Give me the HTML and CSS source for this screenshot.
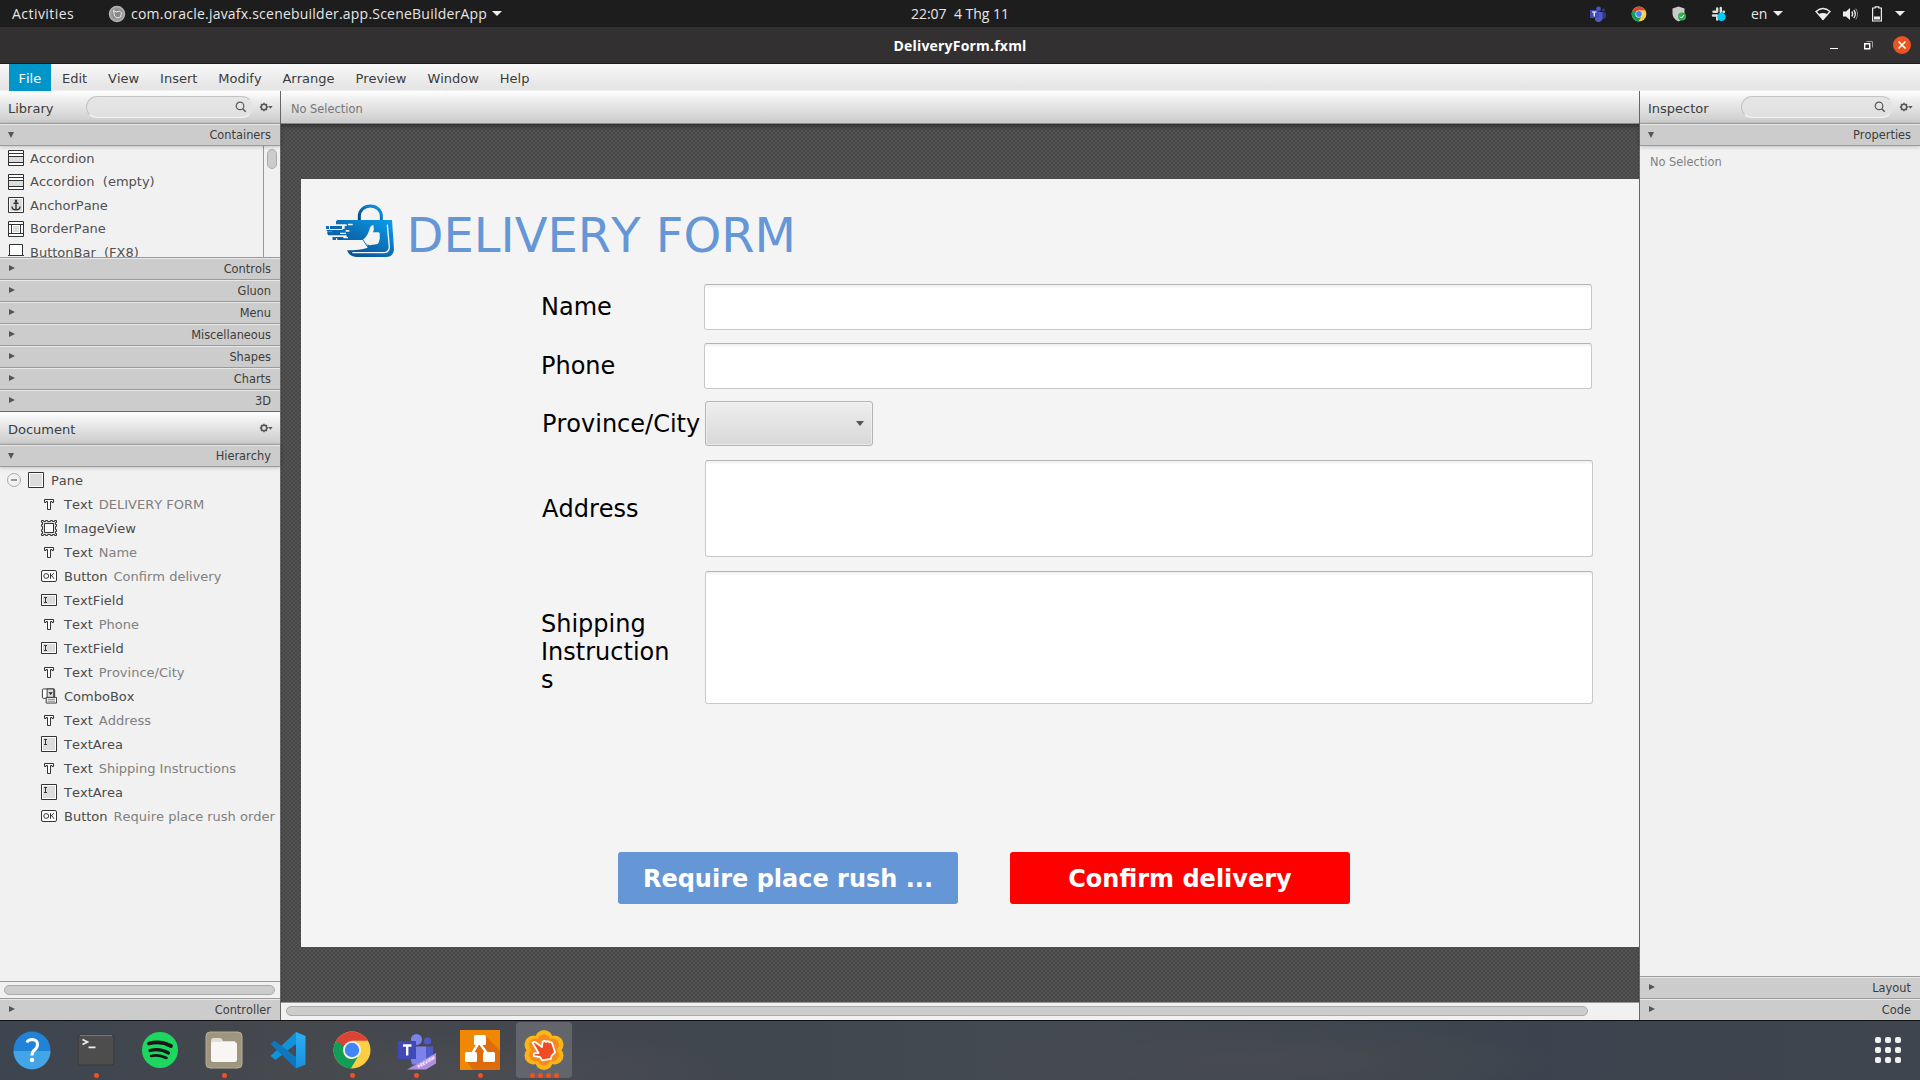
FILE: index.html
```html
<!DOCTYPE html>
<html lang="en">
<head>
<meta charset="utf-8">
<title>DeliveryForm.fxml</title>
<link rel="stylesheet" href="styles.css">
</head>
<body>
<svg width="0" height="0" class="defs">
  <defs>
    <linearGradient id="bag" x1="0" y1="1" x2="1" y2="0"><stop offset="0" stop-color="#063f7c"/><stop offset=".5" stop-color="#0a6db4"/><stop offset="1" stop-color="#0a9fee"/></linearGradient>
    <linearGradient id="vs" x1="0" y1="0" x2="0" y2="1"><stop offset="0" stop-color="#2ab0f5"/><stop offset="1" stop-color="#1a8fdc"/></linearGradient>
    <symbol id="gear" viewBox="0 0 14 10"><circle cx="5" cy="5" r="2.7" fill="none" stroke="#555" stroke-width="1.5"/><path d="M5 .8v1.4M5 7.8v1.4M.8 5h1.4M7.8 5h1.4M2 2l1 1M7 7l1 1M2 8l1-1M7 3l1-1" stroke="#555" stroke-width="1.4"/><path d="M9.2 4h4.4l-2.2 2.8z" fill="#555"/></symbol>
    <symbol id="search" viewBox="0 0 12 12"><circle cx="5" cy="4.9" r="3.8" fill="none" stroke="#5a5a5a" stroke-width="1.2"/><path d="M7.7 7.7l3 3" stroke="#5a5a5a" stroke-width="1.6"/></symbol>
    <symbol id="i-acc" viewBox="0 0 16 16"><path fill="#fff" stroke="#333" d="M.5.5h15v15H.5z"/><path fill="#dcdcdc" d="M1 7h14v5H1z"/><path stroke="#333" d="M0 3.5h16M0 6.5h16M0 12.5h16"/></symbol>
    <symbol id="i-anchor" viewBox="0 0 16 16"><path fill="#fff" stroke="#333" d="M.5.5h15v15H.5z"/><path fill="#dcdcdc" d="M2 2h12v12H2z"/><path fill="none" stroke="#333" stroke-width="1.4" d="M8 4v9M5.5 6.2h5M4 9.5c0 2 1.500 3.300 4 3.300s4-1.300 4-3.300"/><circle cx="8" cy="3.800" r="1.300" fill="#333"/></symbol>
    <symbol id="i-border" viewBox="0 0 16 16"><path fill="#fff" stroke="#333" d="M.5.5h15v15H.5z"/><path fill="none" stroke="#333" d="M0 3.500h16M0 12.500h16M3.500 3v10M12.500 3v10"/><path fill="#dcdcdc" d="M5 5h6v6H5z"/></symbol>
    <symbol id="i-pane" viewBox="0 0 16 16"><path fill="#fff" stroke="#333" d="M.5.5h15v15H.5z"/><path fill="#dcdcdc" d="M2 2h12v12H2z"/></symbol>
    <symbol id="i-bbar" viewBox="0 0 16 16"><path fill="#fff" stroke="#333" d="M1.500.5h13v11h-13z"/><path stroke="#333" d="M0 11.500h16"/></symbol>
    <symbol id="i-text" viewBox="0 0 16 16"><path fill="#fff" stroke="#333" d="M3.500 3.500h9v3h-1.500v-1h-1.500v8h-3v-8H5v1H3.500z"/></symbol>
    <symbol id="i-img" viewBox="0 0 16 16"><path fill="#dcdcdc" stroke="#333" d="M.5.5h2v1h2v-1h2v1h3v-1h2v1h2v-1h2v2h-1v2h1v2h-1v3h1v2h-1v2h1v2h-2v-1h-2v1h-2v-1h-3v1h-2v-1h-2v1h-2v-2h1v-2h-1v-2h1v-3h-1v-2h1v-2h-1z"/><path fill="#fff" stroke="#333" d="M3.500 3.500h9v9h-9z"/></symbol>
    <symbol id="i-btn" viewBox="0 0 16 16"><rect x=".5" y="2.500" width="15" height="11" rx="1.500" fill="#fff" stroke="#333"/><circle cx="5.200" cy="8" r="2.400" fill="none" stroke="#333"/><path fill="none" stroke="#333" d="M9.500 5.200v5.600M13 5.200L9.800 8.300M10.700 7.500L13 10.800"/></symbol>
    <symbol id="i-field" viewBox="0 0 16 16"><path fill="#fff" stroke="#333" d="M.5 2.500h15v11H.5z"/><path fill="#dcdcdc" d="M2 4h12v8H2z"/><path stroke="#333" d="M3 5.500h3M3 10.500h3M4.500 5v6"/></symbol>
    <symbol id="i-area" viewBox="0 0 16 16"><path fill="#fff" stroke="#333" d="M.5.5h15v15H.5z"/><path fill="#dcdcdc" d="M2 2h12v12H2z"/><path stroke="#333" d="M3 3.500h3M3 8.500h3M4.500 3v6"/></symbol>
    <symbol id="i-combo" viewBox="0 0 17 16"><rect x="1.500" y=".5" width="13" height="10" rx="1" fill="#fff" stroke="#333"/><path fill="#dcdcdc" stroke="#333" d="M6.500.5h7v9h-7z"/><path fill="#222" d="M8 4h4.500l-2.200 3z"/><path fill="#fff" stroke="#333" d="M5.500 9.500h11v6h-11z"/><path stroke="#777" d="M7 11.500h8M7 13.500h8"/></symbol>
    <symbol id="chrome" viewBox="0 0 40 40"><circle cx="20" cy="20" r="18.500" fill="#ffcd40"/><path fill="#db4437" d="M4 10.800A18.500 18.500 0 0 1 36 10.800H20a9.200 9.200 0 0 0-8 4.700L11 23z"/><path fill="#0f9d58" d="M4 10.800a18.500 18.500 0 0 0 14.800 27.600L27 25l-7 4a9 9 0 0 1-8-4.500z"/><path fill="#db4437" d="M4 10.800h16v8z"/><path fill="#0f9d58" d="M4 10.800L12 24.600 20 21z"/><circle cx="20" cy="20" r="9" fill="#f1f1f1"/><circle cx="20" cy="20" r="7.200" fill="#4285f4"/></symbol>
  </defs>
</svg>

<header class="topbar">
  <div class="top-left"><span class="activities">Activities</span>
    <svg class="app-ico" width="18" height="18" viewBox="0 0 18 18"><circle cx="9" cy="9" r="7.500" fill="#999" stroke="#b4b4b4" stroke-width="1.500"/><circle cx="9" cy="9" r="4.800" fill="#8a8a8a"/><path d="M5.500 5.500l3 1.500 3-1 2 2-1 4-3.500 1-2.500-2z" fill="#888" stroke="#eee"/></svg>
    <span class="app-name">com.oracle.javafx.scenebuilder.app.SceneBuilderApp</span><i class="caret"></i></div>
  <div class="clock">22:07&nbsp; 4 Thg 11</div>
  <div class="tray">
    <svg width="16" height="16" viewBox="0 0 16 16"><circle cx="8.500" cy="3" r="2.400" fill="#4b53bc"/><circle cx="13.500" cy="4" r="1.600" fill="#34387f"/><path fill="#34387f" d="M11 6.500h5v4.500q-1 2.500-4 2z"/><path fill="#5059c9" d="M5 6h7.500v6a4 4 0 0 1-7.500 2z"/><path fill="#4149b5" d="M0 4h8.500v8H0z"/><path stroke="#fff" stroke-width="1.200" d="M2 6h4.500M4.200 6v4.500"/></svg>
    <svg width="16" height="16"><use href="#chrome"/></svg>
    <svg width="16" height="16" viewBox="0 0 16 16"><path fill="#c9c9c9" d="M7.500.5l6 2v5q0 5-6 8-6-3-6-8v-5z"/><circle cx="11" cy="10.500" r="4" fill="#2db04b"/><path d="M9 10.500l1.500 1.500 2.500-3" fill="none" stroke="#fff"/></svg>
    <svg width="16" height="16" viewBox="0 0 16 16"><path stroke="#ddd" stroke-width="2.400" stroke-linecap="round" d="M6.200 2.500v3M9.800 2v4M2.500 5.800h3.500M12.500 5.800h.5M2 9.500h4M6.200 10v3.500"/><circle cx="10.500" cy="10.800" r="4.200" fill="#00cdf5"/></svg>
    <span class="lang">en</span><i class="caret"></i>
    <svg class="wifi" width="16" height="14" viewBox="0 0 16 14"><path fill="none" stroke="#eee" stroke-width="1.300" d="M1 4.500Q8-1.500 15 4.500L8 12.500z"/><path fill="#eee" d="M3.800 7Q8 4.800 12.200 7L8 13z"/></svg>
    <svg width="16" height="14" viewBox="0 0 16 14"><path fill="#eee" d="M0 4.500h3L7 1v12L3 9.500H0z"/><path fill="none" stroke="#eee" stroke-width="1.300" d="M8.800 4.500q1.800 2.500 0 5M10.800 3q3 4 0 8"/><path fill="none" stroke="#888" d="M12.800 1.500q3.500 5.500 0 11"/></svg>
    <svg width="10" height="16" viewBox="0 0 10 16"><path fill="none" stroke="#eee" stroke-width="1.200" d="M.6 2h2.600V.8h3.600V2h2.600v13H.6z"/><path fill="#eee" d="M2 10.500h6V13.500H2z"/></svg>
    <i class="caret"></i>
  </div>
</header>
<div class="titlebar"><b>DeliveryForm.fxml</b>
  <div class="winctl"><i class="min"></i>
    <svg width="9" height="9" viewBox="0 0 9 9"><path fill="none" stroke="#fff" stroke-width="1.400" d="M.7 2.700h5v5h-5z"/><path fill="none" stroke="#999" d="M2.500.5h6v6"/></svg>
    <svg width="18" height="18" viewBox="0 0 18 18"><circle cx="9" cy="9" r="9" fill="#e95420"/><path stroke="#fff" stroke-width="1.600" d="M5.500 5.500l7 7M12.500 5.500l-7 7"/></svg>
  </div>
</div>
<nav class="menubar"><span class="on">File</span><span>Edit</span><span>View</span><span>Insert</span><span>Modify</span><span>Arrange</span><span>Preview</span><span>Window</span><span>Help</span></nav>

<main class="work">
  <aside class="left">
    <div class="head"><span class="lib">Library</span><div class="find"><svg width="12" height="12"><use href="#search"/></svg></div><svg width="14" height="10"><use href="#gear"/></svg></div>
    <div class="bar open"><i></i>Containers</div>
    <div class="liblist">
      <ul>
        <li><svg><use href="#i-acc"/></svg>Accordion</li>
        <li><svg><use href="#i-acc"/></svg>Accordion&nbsp; (empty)</li>
        <li><svg><use href="#i-anchor"/></svg>AnchorPane</li>
        <li><svg><use href="#i-border"/></svg>BorderPane</li>
        <li><svg><use href="#i-bbar"/></svg>ButtonBar&nbsp; (FX8)</li>
      </ul>
      <div class="vscroll"><i></i></div>
    </div>
    <div class="bar"><i></i>Controls</div>
    <div class="bar"><i></i>Gluon</div>
    <div class="bar"><i></i>Menu</div>
    <div class="bar"><i></i>Miscellaneous</div>
    <div class="bar"><i></i>Shapes</div>
    <div class="bar"><i></i>Charts</div>
    <div class="bar"><i></i>3D</div>
    <div class="head doc"><span>Document</span><svg width="14" height="10"><use href="#gear"/></svg></div>
    <div class="bar open"><i></i>Hierarchy</div>
    <ul class="tree">
      <li class="root"><em></em><svg><use href="#i-pane"/></svg>Pane</li>
      <li><svg><use href="#i-text"/></svg>Text<s>DELIVERY FORM</s></li>
      <li><svg><use href="#i-img"/></svg>ImageView</li>
      <li><svg><use href="#i-text"/></svg>Text<s>Name</s></li>
      <li><svg><use href="#i-btn"/></svg>Button<s>Confirm delivery</s></li>
      <li><svg><use href="#i-field"/></svg>TextField</li>
      <li><svg><use href="#i-text"/></svg>Text<s>Phone</s></li>
      <li><svg><use href="#i-field"/></svg>TextField</li>
      <li><svg><use href="#i-text"/></svg>Text<s>Province/City</s></li>
      <li><svg><use href="#i-combo"/></svg>ComboBox</li>
      <li><svg><use href="#i-text"/></svg>Text<s>Address</s></li>
      <li><svg><use href="#i-area"/></svg>TextArea</li>
      <li><svg><use href="#i-text"/></svg>Text<s>Shipping Instructions</s></li>
      <li><svg><use href="#i-area"/></svg>TextArea</li>
      <li><svg><use href="#i-btn"/></svg>Button<s>Require place rush order</s></li>
    </ul>
    <div class="hscroll"><i></i></div>
    <div class="bar"><i></i>Controller</div>
  </aside>

  <section class="center">
    <div class="head sel">No Selection</div>
    <div class="canvas">
      <div class="pane">
        <div class="title">
          <svg width="69" height="54" viewBox="78 72 207 162">
            <path fill="none" stroke="url(#bag)" stroke-width="9" d="M178 124V108a33 30 0 0 1 66 0v16"/>
            <path fill="url(#bag)" d="M112 120H276L282 208Q281 230 258 231H168Q147 229 141 211Q178 211 203 203L188 180H112V175H98V171H140V166H84V161H96V153H80V150H128V147H90V138H140V133H108V124z"/>
            <path fill="url(#bag)" d="M78 138h9v9h-9zM82 154h17v9H82zM98 171h10v9H98z"/>
            <path fill="#f4f4f4" d="M144 131h14v5h-14zM126 138h8v9h-8zM137 150h11v5h-11zM120 158h18v4h-18zM130 171h14v4h-14z"/>
            <path fill="#f4f4f4" d="M190 178Q203 168 208 149Q211 136 220 135Q224 146 219 157H237Q241 160 239 168Q241 175 238 181Q238 188 233 192L209 196L201 193z"/>
            <path fill="none" stroke="#f4f4f4" stroke-width="4" d="M262 134L268 202Q267 216 254 218H157"/>
            <path fill="none" stroke="#f4f4f4" stroke-width="2" d="M190 178L203 197"/>
          </svg>
          <h1>DELIVERY FORM</h1>
        </div>
        <div class="row name"><label>Name</label><div class="field"></div></div>
        <div class="row phone"><label>Phone</label><div class="field"></div></div>
        <div class="row city"><label>Province/City</label><div class="combo"><i></i></div></div>
        <div class="row addr"><label>Address</label><div class="field"></div></div>
        <div class="row ship"><label>Shipping<br>Instruction<br>s</label><div class="field"></div></div>
        <div class="actions"><div class="btn blue">Require place rush ...</div><div class="btn red">Confirm delivery</div></div>
      </div>
    </div>
    <div class="cscroll"><i></i></div>
  </section>

  <aside class="right">
    <div class="head"><span class="insp">Inspector</span><div class="find"><svg width="12" height="12"><use href="#search"/></svg></div><svg width="14" height="10"><use href="#gear"/></svg></div>
    <div class="bar open"><i></i>Properties</div>
    <div class="props">No Selection</div>
    <div class="bar"><i></i>Layout</div>
    <div class="bar"><i></i>Code</div>
  </aside>
</main>

<footer class="dock">
  <div class="app"><svg viewBox="0 0 40 40"><circle cx="20" cy="20" r="18.500" fill="#2083d8"/><path fill="#43a4e6" d="M1.500 21h37a18.500 18.500 0 0 1-37 0z"/><path fill="none" stroke="#fff" stroke-width="3" d="M15 12.500q1-3 5.500-3 5 .5 5 5 0 3-3 5.500-2.500 2-2.500 5.500"/><circle cx="20" cy="30" r="2.200" fill="#fff"/></svg></div>
  <div class="app"><svg viewBox="0 0 40 40"><rect x="2" y="5" width="36" height="30" rx="3" fill="#4d4d4d" stroke="#393939"/><path stroke="#777" d="M4 5.500h32"/><path fill="none" stroke="#eee" stroke-width="1.700" d="M6.500 9.500l5 2.500-5 2.500M12.500 17.300h7"/></svg><u><b></b></u></div>
  <div class="app"><svg viewBox="0 0 40 40"><circle cx="20" cy="20" r="18" fill="#1ed760"/><g fill="none" stroke="#171717" stroke-linecap="round"><path stroke-width="3.800" d="M9 13.500q12-3 22 2.500"/><path stroke-width="3.200" d="M10 20.500q10-2.500 18.500 2.500"/><path stroke-width="2.600" d="M11 26q8-2 15.500 2"/></g></svg></div>
  <div class="app"><svg viewBox="0 0 40 40"><rect x="2" y="2" width="36" height="36" rx="4" fill="#9f967f" stroke="#b6ad98"/><path fill="#e3dfd6" d="M7 11q0-3 3-3h6q2 0 3 3h12v8H7z"/><rect x="7" y="12" width="26" height="20" rx="2.500" fill="#f8f6f4"/></svg><u><b></b></u></div>
  <div class="app"><svg viewBox="0 0 40 40"><path fill="#1193d9" d="M2.500 26L28 2v12L7.500 30z"/><path fill="#0f77bd" d="M2.500 14L6.500 10.500 28 27v11.500z"/><path fill="url(#vs)" d="M28 2l9.500 4v28.500L28 38.500z"/></svg></div>
  <div class="app"><svg><use href="#chrome"/></svg><u><b></b></u></div>
  <div class="app"><svg viewBox="0 0 40 40"><circle cx="20.500" cy="9.500" r="5.500" fill="#7b83eb"/><circle cx="31.500" cy="11" r="3.600" fill="#5059c9"/><path fill="#5059c9" d="M28 16.500h9v14h-9z"/><path fill="#7b83eb" d="M12 16.500h18v18H16z"/><path fill="#4149b5" d="M2 11h18v18H2z"/><path stroke="#fff" stroke-width="2.400" d="M7 15.500h8.500M11.200 15.500v10"/><path fill="#b28ee0" d="M11 39.500L40 23v10.500L30 39.500z"/><text x="22.500" y="38.500" transform="rotate(-31 22.500 38.500)" font-size="4.500" font-weight="bold" fill="#fff" font-family="Open Sans,sans-serif">PREVIEW</text></svg><u><b></b></u></div>
  <div class="app"><svg viewBox="0 0 40 40"><path fill="#f08705" d="M0 0h40v40H0z"/><path fill="#df6c0c" d="M25.500 6L40 20.500V40H13L7 31.500 18 14z"/><path fill="none" stroke="#fff" stroke-width="2.500" d="M12 24l7-12 9 13"/><g fill="#fff"><rect x="14" y="5" width="12" height="10" rx="1.500"/><rect x="5" y="22" width="12" height="10" rx="1.500"/><rect x="23" y="22" width="12" height="10" rx="1.500"/></g></svg><u><b></b></u></div>
  <div class="app active"><svg viewBox="0 0 40 40"><g fill="#fdb515"><circle cx="20" cy="9" r="9"/><circle cx="20" cy="31" r="9"/><circle cx="9.500" cy="14.500" r="9"/><circle cx="30.500" cy="14.500" r="9"/><circle cx="9.500" cy="25.500" r="9"/><circle cx="30.500" cy="25.500" r="9"/></g><g fill="#f58a1f"><circle cx="20" cy="11" r="6.500"/><circle cx="20" cy="29" r="6.500"/><circle cx="11.500" cy="15" r="6.500"/><circle cx="28.500" cy="15" r="6.500"/><circle cx="11.500" cy="25" r="6.500"/><circle cx="28.500" cy="25" r="6.500"/></g><path fill="#ef4c23" stroke="#fff" stroke-width="1.800" stroke-linejoin="round" d="M8.500 12.500q2.500-1.500 4 .5l5.500 4 .5-5q2-2 3.500 0 2-1.500 3.500.3 2.500-.8 3 2l2.500 8-3.500 3.500-.5 3-9 1.500-2-3.300-6-.8q-1-2.500 1-3l3.500-.2z"/></svg><u><b></b><b></b><b></b><b></b></u></div>
  <div class="grid"><b></b><b></b><b></b><b></b><b></b><b></b><b></b><b></b><b></b></div>
</footer>
</body>
</html>
```
FILE: styles.css
```css
* { box-sizing: border-box; }
body { margin: 0; width: 1920px; height: 1080px; overflow: hidden; display: flex; flex-direction: column; font: 13px "DejaVu Sans", sans-serif; font-kerning: none; color: #3c3c3c; background: #1d1d1d; }
.defs { position: absolute; }
svg { flex: none; display: block; }
ul { list-style: none; margin: 0; padding: 0; }
.caret { width: 0; height: 0; border: 5px solid transparent; border-top: 5px solid #eee; border-bottom: 0; }

.topbar { height: 27px; flex: none; display: grid; grid-template-columns: 1fr auto 1fr; align-items: center; background: #1d1d1d; color: #e6e6e6; font: 14px/27px "Open Sans", sans-serif; }
.top-left { display: flex; align-items: center; padding-left: 12px; }
.activities { width: 96px; letter-spacing: .45px; }
.app-name { width: 356px; margin: 0 5px 0 5px; white-space: nowrap; letter-spacing: .22px; }
.tray { display: flex; align-items: center; justify-content: flex-end; gap: 24px; padding-right: 15px; }
.tray > svg:first-child { margin-right: 1px; }
.tray .caret { margin-left: -18px; }
.tray .lang { width: 16px; }
.tray .wifi { margin-left: 8px; margin-right: 1px; }
.tray .wifi ~ svg { margin-left: -13px; }
.tray .wifi ~ svg + svg { margin-left: -11px; }
.tray .caret:last-child { margin-left: -11px; }
.titlebar { height: 37px; flex: none; display: grid; grid-template-columns: 1fr auto 1fr; align-items: center; background: #333031; border-bottom: 1px solid #1c1a1b; color: #fff; font: 14px "Open Sans", sans-serif; letter-spacing: .2px; }
.titlebar b { grid-column: 2; }
.winctl { display: flex; justify-content: flex-end; align-items: center; padding-right: 9px; }
.min { width: 8px; height: 1px; background: #fff; margin: 6px 26px 0 0; }
.winctl svg + svg { margin-left: 20px; }

.menubar { height: 27px; flex: none; display: flex; gap: 2px; padding-left: 9px; background: linear-gradient(#f8f8f8, #e4e4e4 92%, #eee); line-height: 29px; }
.menubar span { padding: 0 9.450px; }
.menubar .on { background: #0096c9; color: #fff; }

.work { height: 930px; flex: none; display: grid; grid-template-columns: 281px 1358px 281px; border-bottom: 1px solid #111; }
.left, .right, .center { display: flex; flex-direction: column; min-width: 0; min-height: 0; }
.left { border-right: 1px solid #666; background: #f1f1f1; }
.right { border-left: 1px solid #666; background: #f1f1f1; }
.head { height: 32px; flex: none; display: flex; align-items: center; padding: 2px 8px 0; background: linear-gradient(#fff, #f0f0f0 25%, #cbcbcb); }
.head > svg { margin: -3px 0 0 6px; }
.lib { width: 78px; }
.insp { width: 93px; }
.head .find { flex: 1; height: 22px; margin-top: -2px; border-radius: 11px; border: 1px solid #c4c4c4; border-bottom-color: #f4f4f4; border-right-color: #e4e4e4; background: linear-gradient(#e6e6e6, #e0e0e0); display: flex; align-items: center; justify-content: flex-end; padding-right: 5px; }
.left .head { padding-right: 7px; }
.right .head { padding-left: 8px; padding-right: 7px; }
.right .find { padding-right: 6px; }
.doc { justify-content: space-between; border-top: 1px solid #666; height: 33px; }
.bar { height: 22px; flex: none; display: flex; justify-content: space-between; align-items: center; padding: 1px 9px 0 9px; border-top: 1px solid #999; box-shadow: inset 0 1px #e8e8e8; background: #ccc; font-size: 11.400px; color: #3c3c3c; position: relative; }
.bar i { border: 3.500px solid transparent; border-left: 6px solid #555; border-right: 0; margin-top: -2px; }
.bar.open { height: 23px; border-bottom: 1px solid #999; box-shadow: inset 0 1px #e8e8e8, 0 1px 4px #0003; z-index: 1; }
.bar.open i { border: 3.500px solid transparent; border-top: 6px solid #555; border-bottom: 0; margin: 0 0 0 -1px; }
.liblist { height: 111px; flex: none; display: flex; overflow: hidden; }
.liblist ul { flex: 1; border-right: 1px solid #999; }
.liblist li { height: 23.500px; display: flex; align-items: center; padding: 1px 0 0 8px; gap: 6px; color: #505050; white-space: nowrap; }
li svg { width: 16px; height: 16px; overflow: visible; }
.vscroll { width: 16px; padding: 3px 3px 0; }
.vscroll i { display: block; width: 10px; height: 20px; border: 1px solid #aaa; border-radius: 5px; background: #ccc; }
.tree { flex: 1; padding-top: 1px; color: #4a4a4a; overflow: hidden; }
.tree li { height: 24px; display: flex; align-items: center; padding-left: 41px; white-space: nowrap; }
.tree li svg { margin-right: 7px; }
.tree .root { padding-left: 7px; }
.tree em { width: 14px; height: 14px; border: 1px solid #aaa; border-radius: 7px; margin-right: 7px; background: linear-gradient(#999, #999) center / 6px 2px no-repeat; }
.tree s { text-decoration: none; color: #808080; margin-left: 6px; }
.hscroll { height: 17px; flex: none; border-top: 1px solid #999; padding: 3px 5px 0 4px; }
.hscroll i, .cscroll i { display: block; height: 10px; border: 1px solid #aaa; border-radius: 5px; background: #ccc; }
.sel { color: #777; font-size: 11.400px; padding-left: 10px; padding-top: 4px; }
.canvas { flex: 1; min-height: 0; padding: 55px 0 0 20px; border-top: 1px solid #888; background-color: #4c4c4c; background-image: conic-gradient(#525252 25%, #484848 0 50%, #525252 0 75%, #484848 0); background-size: 4px 4px; box-shadow: inset 0 4px 4px -2px #0006; }
.cscroll { height: 18px; flex: none; background: #f1f1f1; border-top: 1px solid #999; padding: 3px 51px 0 5px; }
.props { flex: 1; padding: 9px 10px; color: #808080; font-size: 11.400px; }

.pane { height: 768px; background: #f4f4f4; color: #000; font-size: 24px; line-height: 28px; }
.title { display: flex; height: 105px; padding: 25px 0 0 25px; }
.title h1 { margin: 3px 0 0 11.500px; font-size: 48px; font-weight: 400; line-height: 56px; color: #6596d6; }
.row { display: flex; align-items: center; height: 46px; width: 1291px; padding-left: 240px; }
.row label { width: 163px; }
.field { flex: 1; align-self: stretch; background: linear-gradient(#f0f0f0, #fff 4px); border: 1px solid #c8c8c8; border-top-color: #b4b4b4; border-radius: 3px; }
.phone { margin-top: 13px; }
.city { margin-top: 12px; height: 45px; padding-left: 241px; }
.combo { width: 168px; height: 45px; border: 1px solid #b4b4b4; border-radius: 3px; box-shadow: inset 0 0 0 1px #f4f4f4aa; background: linear-gradient(#eee, #d8d8d8); display: flex; align-items: center; justify-content: flex-end; padding-right: 8px; }
.combo i { border: 4.500px solid transparent; border-top: 5px solid #555; border-bottom: 0; }
.addr { margin-top: 14px; height: 97px; width: 1292px; padding-left: 241px; }
.ship { margin-top: 14px; height: 133px; width: 1292px; padding-left: 240px; }
.ship label { width: 164px; padding-top: 29px; }
.actions { display: flex; gap: 52px; padding: 148px 0 0 317px; }
.btn { width: 340px; height: 52px; border-radius: 3px; color: #fff; font-weight: 700; line-height: 54px; text-align: center; white-space: nowrap; }
.blue { background: #6596d6; }
.red { background: #f00; }

.dock { flex: 1; display: flex; align-items: flex-start; padding-top: 1px; background: radial-gradient(ellipse 260px 40px at 480px 50px, #4a4c50, transparent), radial-gradient(ellipse 300px 40px at 1250px 40px, #484a50, transparent), linear-gradient(90deg, #3d4550, #45484d 15%, #41474f 40%, #444a51 55%, #3b444e 80%, #3f454e); }
.app { width: 56px; height: 56px; margin: 0 4px; border-radius: 4px; display: flex; flex-direction: column; align-items: center; padding-top: 8px; }
.app svg { width: 40px; height: 40px; }
.app.active { background: #62666c; }
.app u { display: flex; gap: 3px; margin-top: 3px; text-decoration: none; }
.app b { width: 5px; height: 5px; border-radius: 50%; background: #e95420; }
.grid { margin: 15px 19px 0 auto; display: grid; grid-template-columns: repeat(3, 6px); gap: 4px; }
.grid b { width: 6px; height: 6px; border-radius: 2px; background: #f0f0f0; }
```
